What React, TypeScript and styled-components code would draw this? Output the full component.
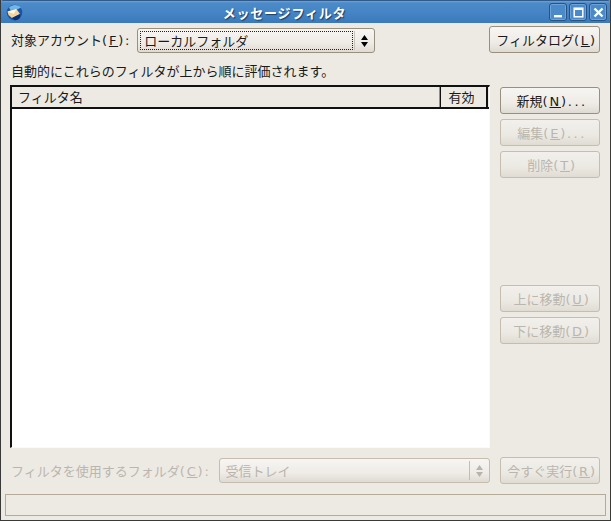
import styled, { createGlobalStyle } from 'styled-components';

const GlobalStyle = createGlobalStyle`
  html, body {
    margin: 0;
    padding: 0;
    background: #edeae4;
  }
  * {
    box-sizing: border-box;
  }
`;

export default function App() {
  return (
    <>
      <GlobalStyle />
      <Win>
        <TitleBar>
          <AppIcon />
          <Title>メッセージフィルタ</Title>
          <WinButtons>
            <WinButton>
              <svg width="11" height="11" viewBox="0 0 11 11">
                <rect x="1" y="8" width="8" height="2.4" fill="#fff" />
              </svg>
            </WinButton>
            <WinButton>
              <svg width="11" height="11" viewBox="0 0 11 11">
                <rect x="1.2" y="1.2" width="8.6" height="8.6" fill="none" stroke="#fff" strokeWidth="1.5" />
                <rect x="1" y="1" width="9" height="2" fill="#fff" />
              </svg>
            </WinButton>
            <WinButton>
              <svg width="11" height="11" viewBox="0 0 11 11">
                <path d="M1.5 1.5 9.5 9.5M9.5 1.500 1.500 9.500" stroke="#fff" strokeWidth="2.4" />
              </svg>
            </WinButton>
          </WinButtons>
        </TitleBar>

        <Body>
          <TopRow>
            <Label $gap={6}>
              対象アカウント<Key>(<u>F</u>):</Key>
            </Label>
            <Combo $width={238} $focused>
              <ComboText>ローカルフォルダ</ComboText>
              <ComboArrow>
                <Arrows color="#000" />
              </ComboArrow>
            </Combo>
            <Spacer />
            <PushButton $width={111}>
              フィルタログ<Key>(<u>L</u>)</Key>
            </PushButton>
          </TopRow>

          <Hint>自動的にこれらのフィルタが上から順に評価されます。</Hint>

          <Middle>
            <ListBox>
              <ListHead>
                <HeadCell $grow>フィルタ名</HeadCell>
                <HeadCell $center>有効</HeadCell>
              </ListHead>
            </ListBox>
            <SideButtons>
              <PushButton>
                新規<Key>(<u>N</u>)</Key><Dots>...</Dots>
              </PushButton>
              <PushButton disabled>
                編集<Key>(<u>E</u>)</Key><Dots>...</Dots>
              </PushButton>
              <PushButton disabled>
                削除<Key>(<u>T</u>)</Key>
              </PushButton>
              <Spacer />
              <PushButton disabled>
                上に移動<Key>(<u>U</u>)</Key>
              </PushButton>
              <PushButton disabled>
                下に移動<Key>(<u>D</u>)</Key>
              </PushButton>
            </SideButtons>
          </Middle>

          <BottomRow>
            <Label $gap={8} $disabled>
              フィルタを使用するフォルダ<Key>(<u>C</u>):</Key>
            </Label>
            <Combo $width={271} $disabled>
              <ComboText>受信トレイ</ComboText>
              <ComboArrow $disabled>
                <Arrows color="#b8b4ac" />
              </ComboArrow>
            </Combo>
            <Spacer />
            <PushButton disabled>
              今すぐ実行<Key>(<u>R</u>)</Key>
            </PushButton>
          </BottomRow>
        </Body>

        <StatusBar />
      </Win>
    </>
  );
}

function Arrows({ color }: { color: string }) {
  return (
    <svg width="9" height="14" viewBox="0 0 9 14">
      <path d="M4.5 1 8 6H1zM1 8h7l-3.500 5z" fill={color} />
    </svg>
  );
}

// thunderbird-ish globe with envelope
function AppIcon() {
  return (
    <svg width="17" height="17" viewBox="0 0 17 17">
      <circle cx="8.500" cy="8.500" r="7.800" fill="#1a55a8" />
      <path d="M3 3.500C6 0 12 0 15 3.500L11 5.500 4.500 6z" fill="#6fb6ea" />
      <path d="M1.500 7.500 10.500 5 14 10 6 14 2.500 11z" fill="#f3d59c" />
      <path d="M1.500 7.500 7.800 10 10.500 5z" fill="#fff6e2" />
      <path d="M14 10 6 14 8.500 16.300C12.500 16.300 15.500 13.500 14 10z" fill="#0d2f70" />
    </svg>
  );
}

const font = `"DejaVu Sans", "Noto Sans CJK JP", sans-serif`;

const Win = styled.div`
  width: 611px;
  height: 521px;
  display: flex;
  flex-direction: column;
  background: #edeae4;
  border: 1px solid #3a3a38;
  border-top: 0;
  font-family: ${font};
  font-size: 13px;
  color: #1a1a1a;
  overflow: hidden;

  u {
    text-underline-offset: 1px;
  }
`;

const TitleBar = styled.div`
  position: relative;
  flex: none;
  height: 23px;
  margin: 0 -1px;
  display: flex;
  align-items: center;
  padding: 0 4px 0 6px;
  background: linear-gradient(#6da5d8 0, #4c8ac8 2px, #4585c6 50%, #3b79ba 100%);
  border-top: 1px solid #2f5a8a;
  border-radius: 3px 3px 0 0;
`;

const Title = styled.div`
  position: absolute;
  left: 0;
  right: 42px;
  text-align: center;
  font-weight: 700;
  font-size: 13px;
  color: #fff;
  text-shadow: 1px 1px 1px #1c3c60;
  letter-spacing: 0.8px;
`;

const WinButtons = styled.div`
  margin-left: auto;
  display: flex;
  gap: 2px;
`;

const WinButton = styled.div`
  width: 18px;
  height: 18px;
  display: flex;
  align-items: center;
  justify-content: center;
  border: 1px solid #28527f;
  border-radius: 3px;
  background: #4a8aca;
  box-shadow: inset 0 0 0 1px #6ea3d8;
`;

const Body = styled.div`
  flex: 1;
  min-height: 0;
  display: flex;
  flex-direction: column;
  padding: 3px 10px 0 9px;
`;

const TopRow = styled.div`
  flex: none;
  height: 27px;
  display: flex;
  align-items: center;
`;

const BottomRow = styled.div`
  flex: none;
  height: 27px;
  margin-top: 9px;
  display: flex;
  align-items: center;
`;

const Label = styled.span<{ $gap: number; $disabled?: boolean }>`
  padding-left: 1px;
  white-space: nowrap;
  margin-right: ${(p) => p.$gap}px;
  color: ${(p) => (p.$disabled ? '#bab6ae' : '#1a1a1a')};
`;

// the (X) mnemonic sits wider in the reference than the default metrics
const Key = styled.span`
  letter-spacing: 1.8px;
`;

const Spacer = styled.div`
  flex: 1;
`;

const Combo = styled.div<{ $width: number; $focused?: boolean; $disabled?: boolean }>`
  position: relative;
  width: ${(p) => p.$width}px;
  height: 25px;
  display: flex;
  align-items: center;
  border: 1px solid ${(p) => (p.$disabled ? '#c4bdb0' : '#98907f')};
  border-radius: 3px;
  background: linear-gradient(#f7f5f2, #efece7 60%, #dfdbd3);
  color: ${(p) => (p.$disabled ? '#b8b4ac' : '#1a1a1a')};
  ${(p) =>
    p.$focused
      ? `align-self: flex-end;
        &::before {
          content: '';
          position: absolute;
          left: 2px;
          top: 2px;
          bottom: 2px;
          right: 21px;
          border: 1px dotted #222;
        }`
      : ''}
`;

const ComboText = styled.span`
  flex: 1;
  padding-left: 6px;
  white-space: nowrap;
`;

const ComboArrow = styled.span<{ $disabled?: boolean }>`
  flex: none;
  width: 20px;
  height: 19px;
  display: flex;
  align-items: center;
  justify-content: center;
  border-left: 1px solid ${(p) => (p.$disabled ? '#c4bdb0' : '#c9c4ba')};
`;

const PushButton = styled.button<{ $width?: number }>`
  flex: none;
  width: ${(p) => p.$width ?? 100}px;
  height: 27px;
  padding: 0 0 0 4px;
  display: block;
  border: 1px solid #98907f;
  border-radius: 3px;
  background: linear-gradient(#f7f5f2, #efece7 60%, #dfdbd3);
  font-family: ${font};
  font-size: 13px;
  color: #1a1a1a;

  &:disabled {
    border-color: #c4bdb0;
    color: #bab6ae;
    background: linear-gradient(#f2f0ec, #ece9e3 60%, #e0dcd4);
  }
`;

const Dots = styled.span`
  letter-spacing: 2.4px;
`;

const Hint = styled.div`
  flex: none;
  height: 19px;
  margin-top: 9px;
  padding-left: 1px;
  line-height: 19px;
  white-space: nowrap;
`;

const Middle = styled.div`
  flex: 1;
  min-height: 0;
  margin-top: 4px;
  display: flex;
  gap: 10px;
`;

const ListBox = styled.div`
  flex: none;
  width: 480px;
  background: #fff;
  border: 1px solid #fbfaf8;
  border-top: 2px solid #111;
  border-left: 2px solid #111;
`;

const ListHead = styled.div`
  height: 22px;
  display: flex;
  border-bottom: 2px solid #111;
  background: #edeae4;
  padding-right: 1px;
`;

const HeadCell = styled.div<{ $grow?: boolean; $center?: boolean }>`
  ${(p) => (p.$grow ? 'flex: 1;' : 'flex: none; width: 48px;')}
  padding: 0 ${(p) => (p.$center ? 4 : 0)}px 0 ${(p) => (p.$center ? 0 : 6)}px;
  text-align: ${(p) => (p.$center ? 'center' : 'left')};
  line-height: 22px;
  ${(p) => (p.$grow ? 'border-right: 1px solid #98907f;' : 'border-left: 1px solid #111; border-right: 2px solid #111;')}
`;

const SideButtons = styled.div`
  flex: 1;
  padding-top: 2px;
  display: flex;
  flex-direction: column;
  gap: 5px;
  padding-bottom: 104px;
`;

const StatusBar = styled.div`
  flex: none;
  height: 22px;
  margin: 10px 4px 4px;
  border: 1px solid #b5ab99;
`;
